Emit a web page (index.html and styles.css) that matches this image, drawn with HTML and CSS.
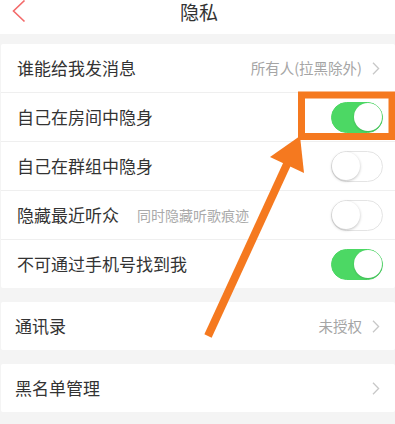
FILE: index.html
```html
<!DOCTYPE html>
<html lang="zh-CN">
<head>
<meta charset="utf-8">
<title>隐私</title>
<link rel="stylesheet" href="styles.css">
</head>
<body>
<header class="topbar">
  <svg class="back" width="14" height="24" viewBox="0 0 14 24"><polyline points="12.5,0.5 1.5,11 12.5,21.5" fill="none" stroke="#f36a6a" stroke-width="1.6"/></svg>
  <h1 class="title">隐私</h1>
</header>
<main class="content">
  <section class="card">
    <div class="row">
      <span class="label">谁能给我发消息</span>
      <span class="value">所有人(拉黑除外)</span>
      <svg class="chev" width="8" height="13" viewBox="0 0 8 13"><polyline points="1,0.8 6.6,6.5 1,12.2" fill="none" stroke="#c8c8c8" stroke-width="1.3"/></svg>
    </div>
    <div class="row">
      <span class="label">自己在房间中隐身</span>
      <span class="switch on"><span class="knob"></span></span>
    </div>
    <div class="row">
      <span class="label">自己在群组中隐身</span>
      <span class="switch"><span class="knob"></span></span>
    </div>
    <div class="row">
      <span class="label">隐藏最近听众</span>
      <span class="sub">同时隐藏听歌痕迹</span>
      <span class="switch"><span class="knob"></span></span>
    </div>
    <div class="row">
      <span class="label">不可通过手机号找到我</span>
      <span class="switch on"><span class="knob"></span></span>
    </div>
  </section>
  <section class="card card-tight">
    <div class="row">
      <span class="label">通讯录</span>
      <span class="value">未授权</span>
      <svg class="chev" width="8" height="13" viewBox="0 0 8 13"><polyline points="1,0.8 6.6,6.5 1,12.2" fill="none" stroke="#c8c8c8" stroke-width="1.3"/></svg>
    </div>
  </section>
  <section class="card card-tight">
    <div class="row">
      <span class="label">黑名单管理</span>
      <span class="value"></span>
      <svg class="chev" width="8" height="13" viewBox="0 0 8 13"><polyline points="1,0.8 6.6,6.5 1,12.2" fill="none" stroke="#c8c8c8" stroke-width="1.3"/></svg>
    </div>
  </section>
</main>
<svg class="annotation" width="395" height="424" viewBox="0 0 395 424">
  <rect x="301.5" y="95" width="90.5" height="41.5" fill="none" stroke="#f5791f" stroke-width="7"/>
  <line x1="288" y1="162" x2="208" y2="336" stroke="#f5791f" stroke-width="8" stroke-linecap="butt"/>
  <polygon points="300,136 270,157 304,173" fill="#f5791f"/>
</svg>
</body>
</html>
```

FILE: styles.css
```css
* { box-sizing: border-box; }
html, body { margin: 0; padding: 0; }
body {
  width: 395px;
  height: 424px;
  overflow: hidden;
  background: #f4f4f4;
  font-family: "Noto Sans CJK SC", "Noto Sans", sans-serif;
  color: #333;
  position: relative;
}
.topbar {
  height: 34px;
  background: #fff;
  position: relative;
  display: flex;
  justify-content: center;
  padding-top: 1px;
}
.back {
  position: absolute;
  left: 12px;
  top: 0;
}
.title {
  margin: 0;
  font-size: 19px;
  font-weight: 400;
  line-height: 22px;
  color: #333;
  padding-left: 3px;
}
.content {
  padding-top: 10px;
  display: flex;
  flex-direction: column;
  gap: 14px;
}
.card {
  background: #fff;
  margin: 0 0 0 1px;
  border-radius: 2px;
}
.row {
  height: 49px;
  display: flex;
  align-items: center;
  padding: 0 12px 0 16px;
  border-top: 1px solid #efefef;
}
.row:first-child { border-top: 0; height: 48px; }
.card-tight .row { padding-left: 14px; height: 48px; }
.label {
  font-size: 17px;
  line-height: 24px;
  color: #333;
}
.sub {
  font-size: 14px;
  color: #aaa;
  margin-left: 18px;
  line-height: 20px;
}
.value {
  margin-left: auto;
  font-size: 14.5px;
  color: #a5a5a5;
  line-height: 20px;
}
.chev {
  margin-left: 10px;
  margin-right: 3px;
}
.switch {
  margin-left: auto;
  width: 52px;
  height: 31px;
  border-radius: 16px;
  background: #fff;
  border: 1.5px solid #e4e4e4;
  position: relative;
  margin-right: 0;
}
.switch .knob {
  position: absolute;
  top: 0;
  left: 0;
  width: 28px;
  height: 28px;
  border-radius: 50%;
  background: #fff;
  box-shadow: 0 1px 3px rgba(0,0,0,0.25);
}
.switch.on {
  background: #4cd864;
  border-color: #4cd864;
}
.switch.on .knob {
  left: auto;
  right: 0;
  box-shadow: 0 1px 2px rgba(0,0,0,0.15);
}
.annotation {
  position: absolute;
  left: 0;
  top: 0;
  pointer-events: none;
}
```
